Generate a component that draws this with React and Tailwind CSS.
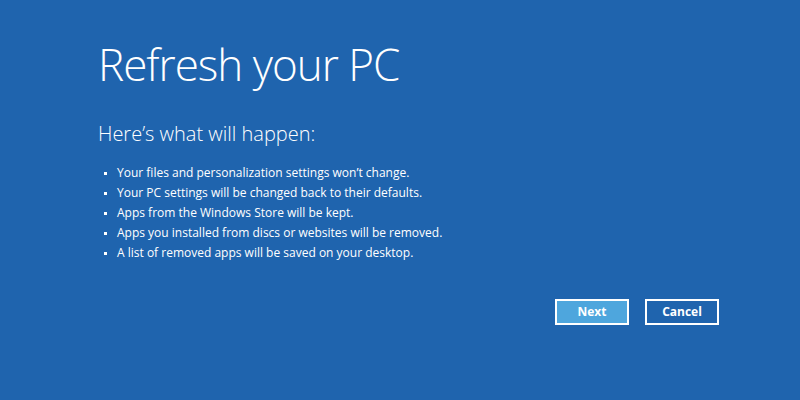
export default function App() {
  const items = [
    "Your files and personalization settings won\u2019t change.",
    "Your PC settings will be changed back to their defaults.",
    "Apps from the Windows Store will be kept.",
    "Apps you installed from discs or websites will be removed.",
    "A list of removed apps will be saved on your desktop.",
  ];
  return (
    <div className="w-[800px] h-[400px] bg-[#1f64ae] text-white overflow-hidden" style={{ fontFamily: '"Open Sans", "Noto Sans", sans-serif' }}>
      <div className="pl-[98px] pt-[37px]">
        <h1 className="text-[44px] leading-[54px] font-light tracking-[-1px]">Refresh your PC</h1>
        <h2 className="mt-[30px] text-[20px] leading-[26px] font-light">Here’s what will happen:</h2>
        <ul className="mt-[16px] flex flex-col text-[12px] leading-[20px]">
          {items.map((t) => (
            <li key={t} className="flex items-center">
              <span className="w-[3px] h-[3px] bg-white ml-[6px] mr-[10px]" />
              <span>{t}</span>
            </li>
          ))}
        </ul>
      </div>
      <div className="flex justify-end gap-[16px] pr-[81px] mt-[36px]">
        <button className="w-[74px] h-[26px] border-2 border-white bg-[#4ea6dd] text-[12px] font-bold">Next</button>
        <button className="w-[74px] h-[26px] border-2 border-white bg-transparent text-[12px] font-bold">Cancel</button>
      </div>
    </div>
  );
}
